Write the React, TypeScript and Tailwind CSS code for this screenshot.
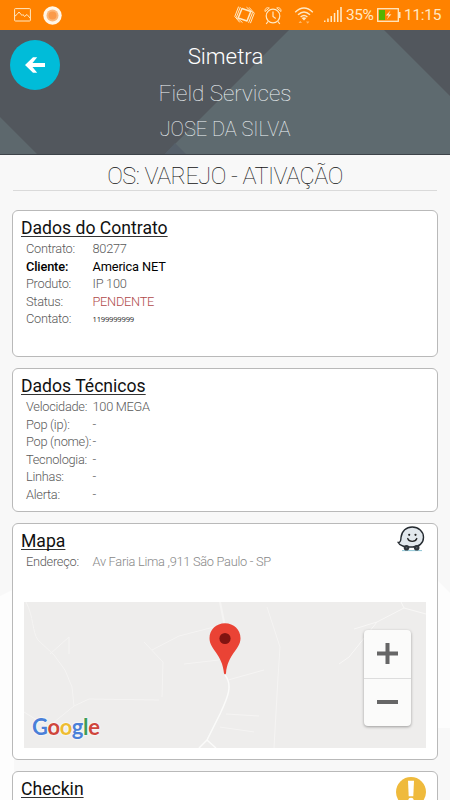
import type { ReactNode } from 'react';

interface Field {
  label: string;
  value: string;
  labelClass?: string;
  valueClass?: string;
}

const contractFields: Field[] = [
  { label: 'Contrato:', value: '80277' },
  {
    label: 'Cliente:',
    value: 'America NET',
    labelClass: 'font-medium text-black tracking-[-0.15px]',
    valueClass: 'font-normal text-black tracking-[-0.15px]',
  },
  { label: 'Produto:', value: 'IP 100' },
  { label: 'Status:', value: 'PENDENTE', valueClass: 'text-[#b04a4a]' },
  {
    label: 'Contato:',
    value: '1199999999',
    valueClass: "font-['Open_Sans'] text-[7.6px] tracking-[-0.2px] font-medium text-[#222]",
  },
];

const technicalFields: Field[] = [
  { label: 'Velocidade:', value: '100 MEGA' },
  { label: 'Pop (ip):', value: '-' },
  { label: 'Pop (nome):', value: '-' },
  { label: 'Tecnologia:', value: '-' },
  { label: 'Linhas:', value: '-' },
  { label: 'Alerta:', value: '-' },
];

function FieldRow({ label, value, labelClass = '', valueClass = '' }: Field) {
  return (
    <div className="flex h-[17.5px] items-center pl-[5px] text-[12.8px] leading-none tracking-[-0.28px] whitespace-nowrap">
      <span className={`w-[66.5px] shrink-0 ${labelClass || 'font-light text-[#5a5a5a]'}`}>{label}</span>
      <span className={valueClass.includes('font-') ? valueClass : `font-light ${valueClass || 'text-[#5a5a5a]'}`}>
        {value}
      </span>
    </div>
  );
}

interface CardProps {
  title: string;
  icon?: ReactNode;
  className: string;
  children?: ReactNode;
}

function Card({ title, icon, className, children }: CardProps) {
  return (
    <section className={`shrink-0 rounded-md border border-[#b9b9b9] bg-white pt-2 pr-[11px] pl-2 ${className}`}>
      <div className="flex h-[22px] items-start justify-between">
        <h2 className="text-[17.6px] leading-[19px] text-[#111] underline decoration-[#333] decoration-1 underline-offset-2 [text-decoration-skip-ink:none]">
          {title}
        </h2>
        {icon}
      </div>
      {children}
    </section>
  );
}

function StatusBar() {
  return (
    <div className="flex h-[30px] shrink-0 items-center bg-[#ff8200] pr-[10px] pl-[14px] text-[#ffe9c4]">
      <svg width="17" height="14" viewBox="0 0 17 14" fill="none" stroke="currentColor">
        <rect x="0.6" y="0.6" width="15.8" height="12.4" rx="0.8" />
        <path d="M1 8 L3 6.5 L5 4 L8 7.5 L9 6.5 L10.5 8.5 L13 6.5 L16 10" />
      </svg>
      <svg className="ml-3" width="19" height="19" viewBox="0 0 19 19">
        <circle cx="9.5" cy="9.5" r="9.2" fill="#fff6e8" />
        <circle cx="9.5" cy="9.5" r="6" fill="#fbb77a" />
        <circle cx="9.5" cy="9.5" r="4" fill="#fa9a4a" />
      </svg>
      <div className="ml-auto flex items-center">
        <svg className="mr-[-2px]" width="21" height="20" viewBox="0 0 21 20" fill="none" stroke="currentColor" strokeWidth="1">
          <path d="M8 3.5 L16.8 6.5 L13 16 L4.2 13 Z" strokeWidth="1.5" strokeLinejoin="round" />
          <path d="M6.4 2 L2.4 12.2 L8.5 17.6 M4.6 1.6 L0.8 11.5 L5.8 17.4" />
          <path d="M14.6 17.8 L18.6 7.5 L12.5 2.2 M16.4 18.2 L20.3 8.2 L15.2 2.4" />
        </svg>
        <svg className="ml-[11px]" width="18" height="19" viewBox="0 0 18 19" fill="none" stroke="currentColor" strokeWidth="1.2">
          <circle cx="9" cy="10" r="6.8" />
          <path d="M9 5.5 V10.5 L11.7 12.5 M4 15.5 L2.2 18 M14 15.5 L15.8 18" />
          <path d="M1 5.5 C0.6 2.5 3 1 5.3 2 Z M17 5.5 C17.4 2.5 15 1 12.7 2 Z" strokeWidth="1" />
        </svg>
        <svg className="ml-[12px]" width="20" height="19" viewBox="0 0 20 19" fill="none" stroke="currentColor" strokeWidth="1.4">
          <path d="M1.2 6.2 Q10 -2 18.8 6.2 M4 8.8 Q10 3.3 16 8.8 M6.6 11 Q10 8 13.4 11" />
          <path d="M7.6 12 Q10 10.4 12.4 12 L10 14.6 Z" fill="currentColor" stroke="none" />
          <path d="M4.6 17 H8 L6.3 14.8 Z M12 15.4 H15.4 L13.7 17.8 Z" fill="#ffb765" stroke="none" />
        </svg>
        <svg className="ml-[10px]" width="18" height="16" viewBox="0 0 18 16" fill="currentColor">
          <rect x="0" y="13.5" width="1.5" height="1.5" />
          <rect x="3.2" y="11.5" width="1.5" height="3.5" />
          <rect x="6.5" y="9" width="1.5" height="6" />
          <rect x="9.8" y="6" width="1.5" height="9" />
          <rect x="13" y="3" width="1.5" height="12" />
          <rect x="16.2" y="0" width="1.6" height="15" />
        </svg>
        <span className="ml-[4px] w-[30px] pt-0.5 text-[15.5px] tracking-[-0.5px] whitespace-nowrap">35%</span>
        <svg className="ml-px" width="24" height="14" viewBox="0 0 24 14">
          <rect x="0.7" y="0.7" width="20.6" height="12.6" fill="none" stroke="#ffe9c4" strokeWidth="1.3" />
          <rect x="2" y="2" width="6" height="10" fill="#55b400" />
          <rect x="21.5" y="4" width="2" height="6" fill="#ffe9c4" />
          <path d="M13.5 2.5 L8.8 7.6 L11.8 7.4 L9.8 11.6 L14.4 6.3 L11.5 6.5 Z" fill="#ffe9c4" />
        </svg>
        <span className="ml-[3px] w-[36px] pt-0.5 text-[15.5px] tracking-[-0.3px] whitespace-nowrap">11:15</span>
      </div>
    </div>
  );
}

function Header() {
  return (
    <header className="relative h-[125px] shrink-0 overflow-hidden border-b border-[#3d4349] bg-[#52575d]">
      <svg className="absolute inset-0" width="450" height="125" viewBox="0 0 450 125">
        <path d="M0 87 L38 125 H0 Z" fill="#5d686d" />
        <path d="M164 125 L289 0 H384 L450 66 V125 Z" fill="#5e6a6f" />
        <path d="M164 125 L175 113 L187 125 Z" fill="#56606a" />
      </svg>
      <button
        type="button"
        aria-label="Voltar"
        className="absolute top-[10px] left-[10px] flex h-[50px] w-[50px] items-center justify-center rounded-full bg-[#00bcd9]"
      >
        <svg width="20" height="16" viewBox="0 0 20 16" fill="#fff">
          <path d="M0 8 L8 0.3 H12.2 L7.5 5.9 H20 V10.1 H7.5 L12.2 15.7 H8 Z" />
        </svg>
      </button>
      <div className="relative flex flex-col items-center pt-[7px] text-[#f0f5f7]">
        <h1 className="h-[38px] pl-px text-[22.3px] leading-[38px] font-light text-white">Simetra</h1>
        <p className="h-9 text-[22.5px] leading-9 font-thin">Field Services</p>
        <p className="h-9 text-[20px] leading-9 font-thin">JOSE DA SILVA</p>
      </div>
    </header>
  );
}

function WazeIcon() {
  return (
    <svg className="mt-[-7px] mr-[1px] shrink-0" width="28" height="28" viewBox="0 0 28 28">
      <path d="M5 25.6 H25" stroke="#8ec5d6" strokeWidth="1" />
      <path
        d="M5.8 21 C3.5 20.5 2 19.2 1.2 17.5 C4 17.5 3.7 15.4 4 12.5 C4.7 6 9.3 2 15.2 2 C21.6 2 26.5 6.5 26.5 12.2 C26.5 18.2 22 22 15.5 22 C11.5 22 8.5 22 5.8 21 Z"
        fill="#e2e8ed"
        stroke="#242a30"
        strokeWidth="1.4"
      />
      <circle cx="12.2" cy="9.8" r="1.1" fill="#222" />
      <circle cx="18.5" cy="9.8" r="1.1" fill="#222" />
      <path d="M10.7 13.5 C12 17.3 18.5 17.3 19.8 13.5" fill="none" stroke="#222" strokeWidth="1.3" strokeLinecap="round" />
      <circle cx="9.5" cy="22.8" r="2.8" fill="#30353b" />
      <circle cx="19.7" cy="22.8" r="2.8" fill="#30353b" />
      <circle cx="9.5" cy="22.8" r="0.8" fill="#5d646b" />
      <circle cx="19.7" cy="22.8" r="0.8" fill="#5d646b" />
    </svg>
  );
}

function AlertIcon() {
  return (
    <svg className="mt-[-3px] shrink-0" width="30" height="30" viewBox="0 0 30 30">
      <circle cx="15" cy="15" r="15" fill="#efba3c" />
      <path d="M12 3.8 H18 L17.3 19.2 H12.7 Z" fill="#fff" />
      <circle cx="15" cy="23.5" r="2.8" fill="#fff" />
    </svg>
  );
}

function MapView() {
  return (
    <div className="relative mt-[30.5px] ml-[3px] h-[146px] w-[402px] overflow-hidden bg-[#eeedec]">
      <svg className="absolute inset-0" width="402" height="146" viewBox="0 0 402 146" fill="none" stroke="#f5f4f3">
        <path d="M2 0 C10 15 8 30 14 38 L30 53 L41 68 L48 85 L50 104 L24 125 L0 110" />
        <path d="M26 52 L45 35 L45 52 M50 104 L65 97 L135 98 M138 95 L139 60 L120 40" />
        <path d="M128 48 L155 34 L190 25 M160 62 L195 58" />
        <path d="M196 0 L201 25" strokeWidth="2" />
        <path d="M201 73 C209 83 204 95 196 112 L183 138 L192 146 M183 138 L175 146" strokeWidth="1.5" stroke="#fbfbfa" />
        <path d="M204 78 L240 68 M202 112 L235 114 M196 125 L230 130" />
        <path d="M243 5 L256 45 L254 75 L250 146" />
        <path d="M402 12 L380 6 L377 0 M380 6 L353 20 L330 27 M353 20 L325 55 L315 62" stroke="#f8f7f6" />
      </svg>
      <svg className="absolute top-[21px] left-[185px]" width="32" height="52" viewBox="0 0 32 52">
        <path
          d="M16 0.3 C7.2 0.3 0.5 6.8 0.5 15.2 C0.5 26.5 13.5 31 15 50.5 Q16 52 17 50.5 C18.5 31 31.5 26.5 31.5 15.2 C31.5 6.8 24.8 0.3 16 0.3 Z"
          fill="#ea4335"
        />
        <circle cx="16" cy="15.5" r="5.6" fill="#811411" />
      </svg>
      <div className="absolute top-[28px] right-[15px] flex h-[96px] w-[47px] flex-col rounded-sm bg-[#fbfbfa] shadow-[0_1px_3px_rgba(0,0,0,0.35)]">
        <button type="button" aria-label="Aumentar zoom" className="flex flex-1 items-center justify-center border-b border-[#ddd]">
          <svg width="21" height="21" viewBox="0 0 21 21" fill="#666">
            <path d="M8.5 0 H12.5 V8.5 H21 V12.5 H12.5 V21 H8.5 V12.5 H0 V8.5 H8.5 Z" />
          </svg>
        </button>
        <button type="button" aria-label="Diminuir zoom" className="flex flex-1 items-center justify-center">
          <span className="h-1 w-[21px] bg-[#666]" />
        </button>
      </div>
      <div className="absolute bottom-[7px] left-[8px] font-['Lato'] text-[22px] leading-[28px] font-bold tracking-[-0.4px] [text-shadow:0_0_2px_#fff,0_0_2px_#fff]">
        <span className="text-[#4a80d8]">G</span>
        <span className="text-[#cf463c]">o</span>
        <span className="text-[#eebc31]">o</span>
        <span className="text-[#4a80d8]">g</span>
        <span className="text-[#3c9d58]">l</span>
        <span className="text-[#cf463c]">e</span>
      </div>
    </div>
  );
}

export default function App() {
  return (
    <div className="flex h-[800px] w-[450px] flex-col overflow-hidden bg-[#f8f8f8] font-[Roboto,sans-serif]">
      <StatusBar />
      <Header />
      <main className="relative flex min-h-0 flex-1 flex-col px-3">
        <svg className="absolute inset-0" width="450" height="645" viewBox="0 0 450 645" fill="#fdfdfd">
          <path d="M0 441 L14 434 V645 H0 Z" />
          <path d="M436 424 L450 438 V573 H436 Z" />
        </svg>
        <div className="relative mx-px mb-[19px] flex h-9 shrink-0 items-center justify-center border-b border-[#dadada] pt-[8px]">
          <h1 className="text-[23.5px] leading-none font-thin tracking-[-0.53px] text-[#111]">OS: VAREJO - ATIVAÇÃO</h1>
        </div>
        <Card title="Dados do Contrato" className="relative mb-[11px] h-[147px]">
          {contractFields.map((field) => (
            <FieldRow key={field.label} {...field} />
          ))}
        </Card>
        <Card title="Dados Técnicos" className="relative mb-[11px] h-[144px]">
          {technicalFields.map((field) => (
            <FieldRow key={field.label} {...field} />
          ))}
        </Card>
        <Card title="Mapa" icon={<WazeIcon />} className="relative mb-[11px] h-[236.5px]">
          <FieldRow label="Endereço:" value="Av Faria Lima ,911 São Paulo - SP" valueClass="text-[#888]" />
          <MapView />
        </Card>
        <Card title="Checkin" icon={<AlertIcon />} className="relative h-[140px]" />
      </main>
    </div>
  );
}
